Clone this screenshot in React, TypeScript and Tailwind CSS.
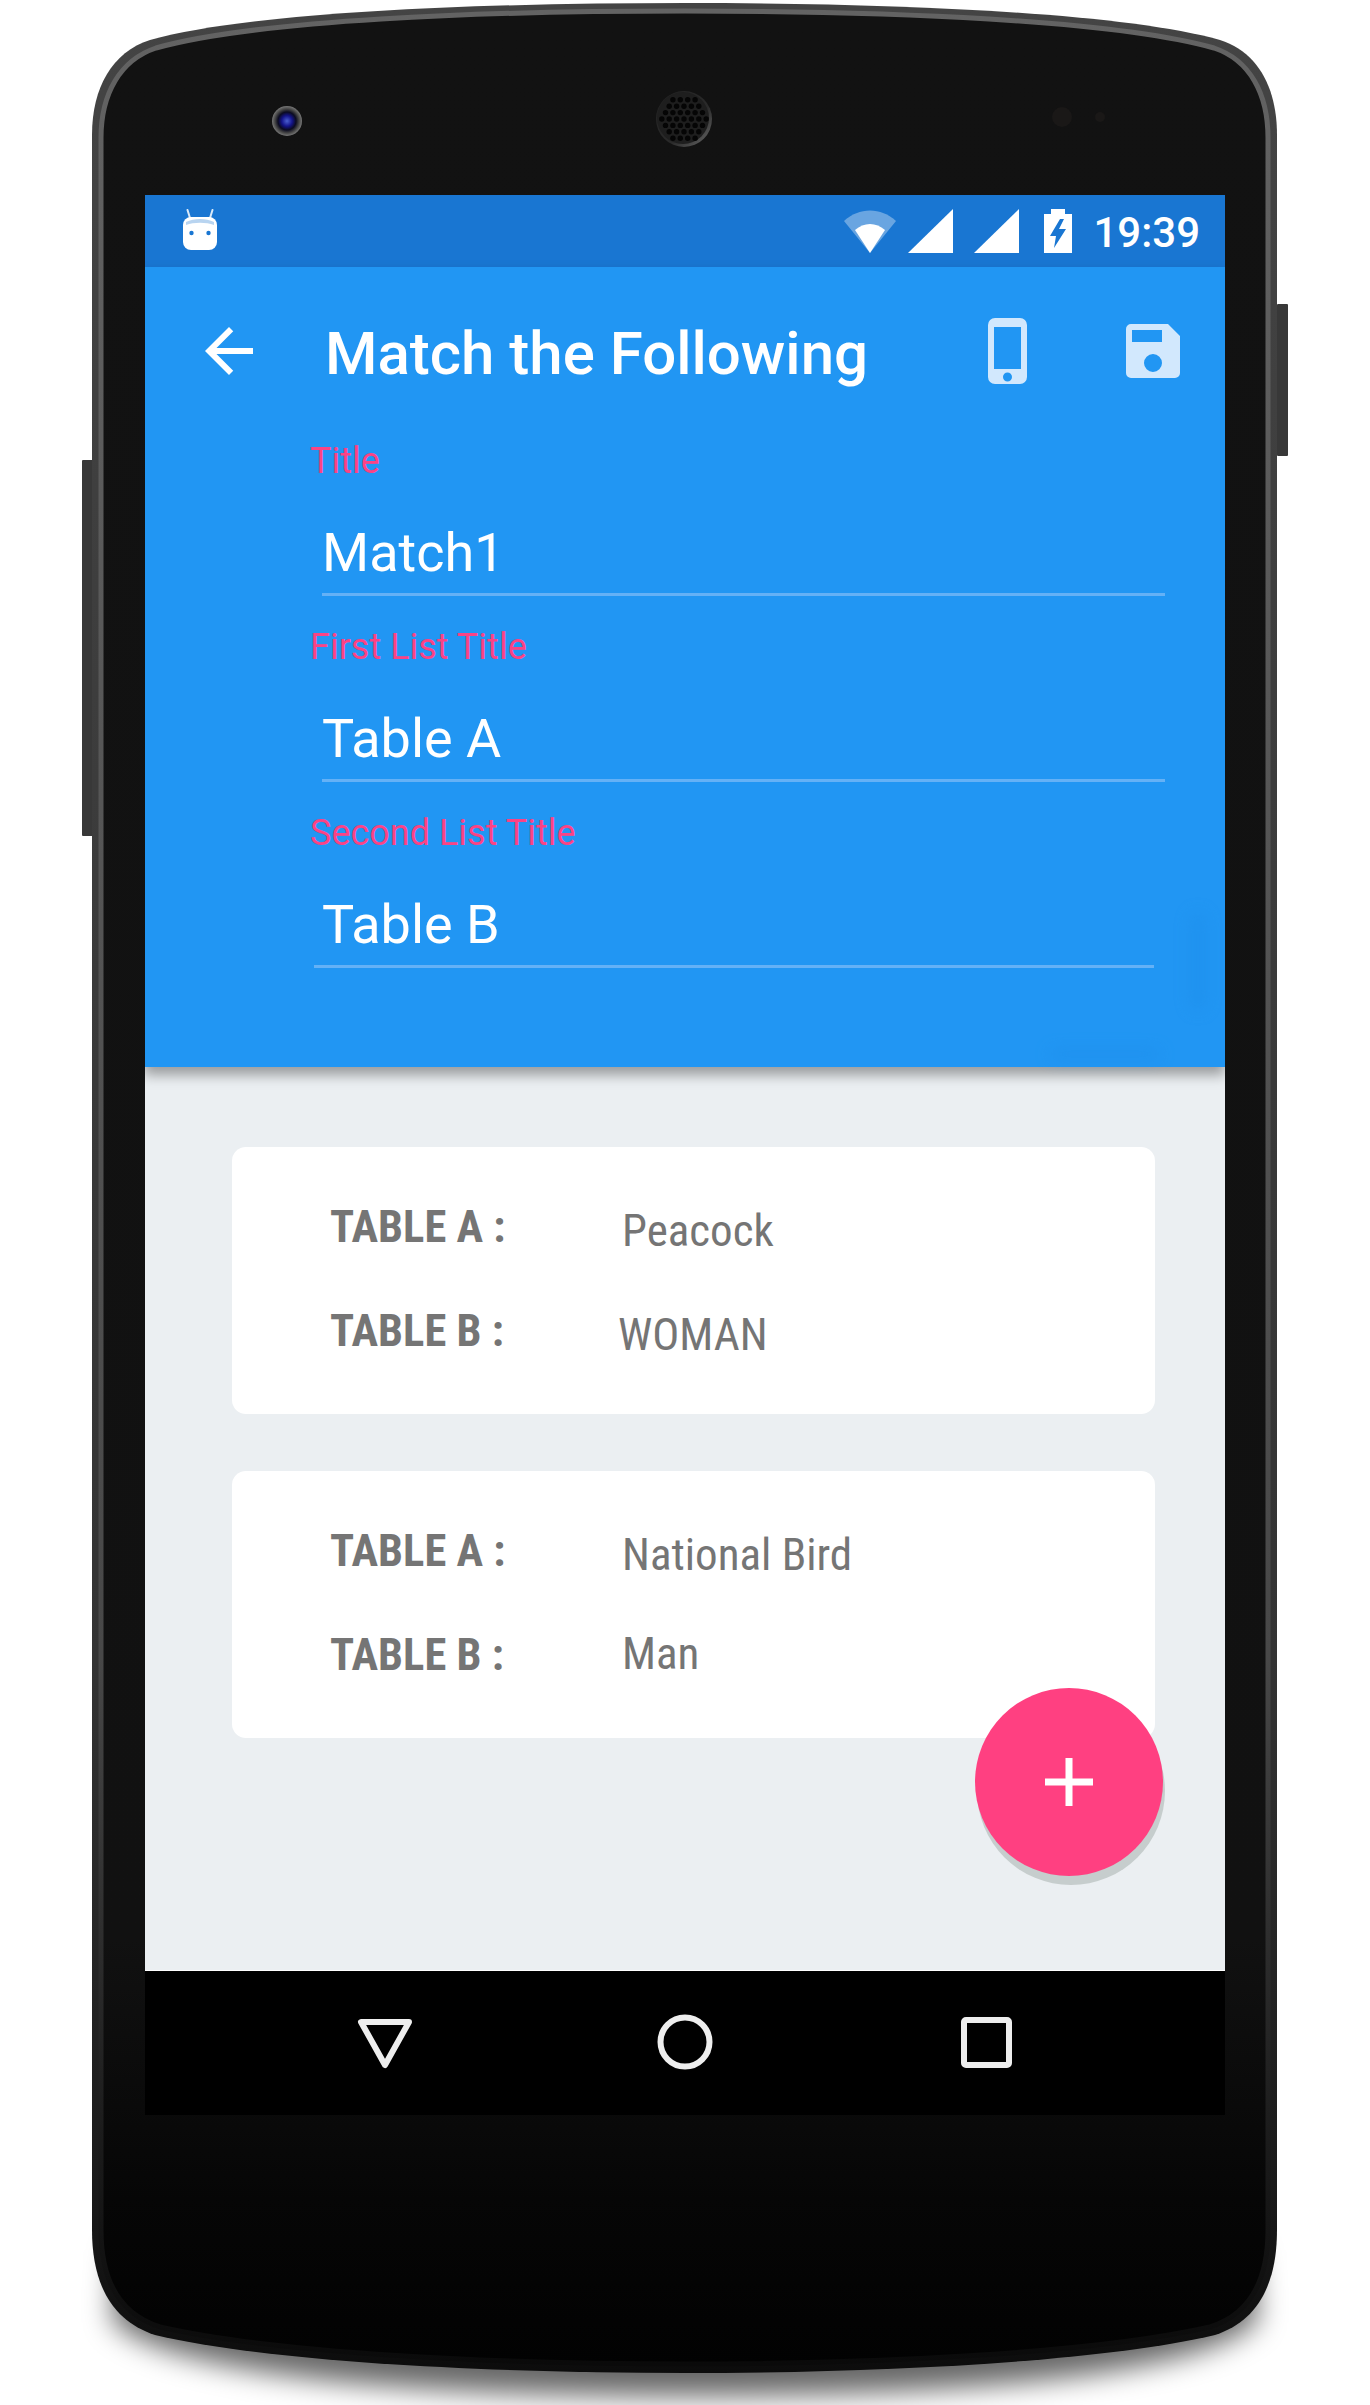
const frame =
  'M92 135C92 88 112 52 150 40C250 12 480 3 685 3C890 3 1120 12 1220 40C1258 52 1277 88 1277 135L1277 2230C1277 2288 1255 2322 1215 2335C1100 2362 880 2373 685 2373C490 2373 270 2362 155 2335C115 2322 92 2288 92 2230Z';
const bezel =
  'M101 138C101 94 120 60 156 48C256 20 480 11 685 11C890 11 1114 20 1214 48C1250 60 1268 94 1268 138L1268 2230C1268 2283 1248 2315 1210 2327C1096 2353 880 2364 685 2364C490 2364 274 2353 160 2327C122 2315 101 2283 101 2230Z';

function speakerHoles() {
  const holes: { x: number; y: number }[] = [];
  for (let row = -3; row <= 3; row++) {
    const count = 7 - Math.abs(row);
    for (let i = 0; i < count; i++) {
      holes.push({ x: 684 + (i - (count - 1) / 2) * 7.4, y: 119 + row * 6.4 });
    }
  }
  return holes;
}

function PhoneBody() {
  return (
    <svg className="absolute left-0 top-0" width="1370" height="2405" viewBox="0 0 1370 2405">
      <defs>
        <linearGradient id="body" x1="0" y1="0" x2="0" y2="1">
          <stop offset="0" stopColor="#121212" />
          <stop offset="0.82" stopColor="#111111" />
          <stop offset="0.93" stopColor="#060606" />
          <stop offset="1" stopColor="#020202" />
        </linearGradient>
        <linearGradient id="rim" x1="0" y1="0" x2="0" y2="1">
          <stop offset="0" stopColor="#444444" />
          <stop offset="0.7" stopColor="#333333" />
          <stop offset="0.92" stopColor="#1a1a1a" />
          <stop offset="1" stopColor="#0c0c0c" />
        </linearGradient>
        <linearGradient id="rimLight" x1="0" y1="0" x2="0" y2="1">
          <stop offset="0" stopColor="#636363" />
          <stop offset="0.7" stopColor="#484848" />
          <stop offset="0.9" stopColor="#1c1c1c" />
          <stop offset="1" stopColor="#0a0a0a" />
        </linearGradient>
        <linearGradient id="grill" x1="0" y1="0" x2="1" y2="1">
          <stop offset="0" stopColor="#222222" />
          <stop offset="0.6" stopColor="#2a2a2a" />
          <stop offset="1" stopColor="#6a6a6a" />
        </linearGradient>
        <radialGradient id="lens">
          <stop offset="0" stopColor="#4a5fd0" />
          <stop offset="0.35" stopColor="#14148a" />
          <stop offset="0.6" stopColor="#0b0b20" />
          <stop offset="0.8" stopColor="#444444" />
          <stop offset="1" stopColor="#777777" />
        </radialGradient>
        <filter id="soft" x="-20%" y="-20%" width="140%" height="140%">
          <feGaussianBlur stdDeviation="14" />
        </filter>
      </defs>
      <path d="M116 2250L1254 2250L1258 2320C1200 2382 900 2396 685 2396C470 2396 170 2382 112 2320Z" fill="#000000" fillOpacity="0.6" filter="url(#soft)" />
      <rect x="1277" y="304" width="11" height="152" rx="1" fill="#383838" />
      <rect x="82" y="460" width="11" height="376" rx="1" fill="#383838" />
      <path d={frame} fill="url(#rim)" />
      <path d={bezel} fill="url(#body)" stroke="url(#rimLight)" strokeWidth="5" />
      <circle cx="287" cy="121" r="15" fill="url(#lens)" />
      <circle cx="684" cy="119" r="28" fill="url(#grill)" />
      <circle cx="683" cy="118" r="26" fill="#1e1e1e" />
      {speakerHoles().map((h) => (
        <circle key={`${h.x}-${h.y}`} cx={h.x} cy={h.y} r="2.7" fill="#050505" />
      ))}
      <circle cx="1062" cy="117" r="10" fill="#1a1817" />
      <circle cx="1100" cy="117" r="5" fill="#1a1817" />
    </svg>
  );
}

function StatusBar() {
  return (
    <div className="flex h-[72px] items-center bg-[#1976d2] pl-[37px] pr-[25px]">
      <svg width="36" height="42" viewBox="0 0 36 42" className="mt-[-2px]">
        <path d="M8 9L5.5 1M28 9L30.5 1" stroke="#ffffff" strokeOpacity="0.85" strokeWidth="2" strokeLinecap="round" />
        <rect x="1" y="8" width="34" height="33" rx="8" fill="#ffffff" />
        <path d="M4 13C12 9 24 9 32 13L32 16C24 13 12 13 4 16Z" fill="#b8d4f0" />
        <circle cx="9.5" cy="24" r="2.2" fill="#1976d2" />
        <circle cx="26.5" cy="24" r="2.2" fill="#1976d2" />
      </svg>
      <div className="ml-auto flex items-center">
        <svg width="52" height="43" viewBox="0 0 52 43">
          <path d="M0 11C15 -3 37 -3 52 11L26 43Z" fill="#ffffff" fillOpacity="0.35" />
          <path d="M11 20C20 12 32 12 41 20L26 43Z" fill="#ffffff" />
        </svg>
        <svg width="45" height="44" viewBox="0 0 45 44" className="ml-[12px]">
          <path d="M45 0V44H0Z" fill="#ffffff" />
        </svg>
        <svg width="45" height="44" viewBox="0 0 45 44" className="ml-[21px]">
          <path d="M45 0V44H0Z" fill="#ffffff" />
        </svg>
        <svg width="28" height="44" viewBox="0 0 28 44" className="ml-[25px]">
          <path fillRule="evenodd" d="M7 5V0H21V5H28V44H0V5ZM16 10L6 27H12L10 39L22 20H15L20 10Z" fill="#ffffff" />
        </svg>
        <span className="ml-[21px] mt-[4px] font-['Roboto',sans-serif] text-[42px] font-medium leading-none text-white">19:39</span>
      </div>
    </div>
  );
}

function AppBarIcons() {
  return (
    <div className="ml-auto flex items-center">
      <svg width="39" height="66" viewBox="0 0 39 66">
        <path fillRule="evenodd" d="M7 0H32A7 7 0 0 1 39 7V59A7 7 0 0 1 32 66H7A7 7 0 0 1 0 59V7A7 7 0 0 1 7 0ZM6 9V51H33V9ZM19.5 54.5A4.5 4.5 0 1 0 19.5 63.5A4.5 4.5 0 1 0 19.5 54.5Z" fill="#d2e8fd" />
      </svg>
      <svg width="54" height="54" viewBox="0 0 54 54" className="ml-[99px]">
        <path fillRule="evenodd" d="M5 0H42L54 12V49A5 5 0 0 1 49 54H5A5 5 0 0 1 0 49V5A5 5 0 0 1 5 0ZM6 6V18H36V6ZM27 30A9 9 0 1 0 27 48A9 9 0 1 0 27 30Z" fill="#d2e8fd" />
      </svg>
    </div>
  );
}

function Field({
  label,
  value,
  line = 'ml-[12px] w-[843px]',
  textPad = '',
}: {
  label: string;
  value: string;
  line?: string;
  textPad?: string;
}) {
  return (
    <div className="h-[186px] pl-[165px]">
      <div className="pt-[7px] font-['Roboto',sans-serif] text-[36px] leading-[38px] text-[#fb4385]">{label}</div>
      <div className={`${line} mt-[46px] h-[70px] border-b-[3px] border-[#64b1f6] font-['Roboto',sans-serif] text-[54px] leading-[54px] text-white`}>
        <span className={textPad}>{value}</span>
      </div>
    </div>
  );
}

function Row({ name, value, shift = 'ml-[117px]', drop = 'mt-[8px]' }: { name: string; value: string; shift?: string; drop?: string }) {
  return (
    <div className="flex h-[104px] items-center pl-[98px]">
      <span className="mt-[3px] w-[175px] whitespace-nowrap font-['Roboto',sans-serif] text-[44.5px] font-bold leading-none text-[#757575] [font-stretch:75%]">{name}</span>
      <span className={`${shift} ${drop} whitespace-nowrap font-['Roboto',sans-serif] text-[45px] leading-none text-[#757575] [font-stretch:75%]`}>{value}</span>
    </div>
  );
}

function Card({ a, b, bShift, bDrop }: { a: string; b: string; bShift?: string; bDrop?: string }) {
  return (
    <div className="ml-[87px] h-[267px] w-[923px] rounded-[14px] bg-white pt-[27px]">
      <Row name="TABLE A :" value={a} />
      <Row name="TABLE B :" value={b} shift={bShift} drop={bDrop} />
    </div>
  );
}

export default function App() {
  return (
    <div className="relative h-[2405px] w-[1370px] overflow-hidden bg-white">
      <PhoneBody />
      <div className="relative pl-[145px] pt-[195px]">
        <div className="flex h-[1920px] w-[1080px] flex-col overflow-hidden">
          <StatusBar />
          <div className="relative z-10 -ml-px h-[800px] border-l border-white bg-[#2196f3] shadow-[0_8px_12px_rgba(0,0,0,0.35)]">
            <div className="flex h-[168px] items-center pl-[48px] pr-[45px]">
              <svg width="72" height="72" viewBox="0 0 24 24">
                <path d="M20 11H7.83l5.59-5.59L12 4l-8 8 8 8 1.41-1.41L7.83 13H20v-2z" fill="#ffffff" />
              </svg>
              <span className="ml-[60px] mt-[6px] font-['Roboto',sans-serif] text-[60px] font-medium leading-none text-white">Match the Following</span>
              <AppBarIcons />
            </div>
            <Field label="Title" value="Match1" />
            <Field label="First List Title" value="Table A" />
            <Field label="Second List Title" value="Table B" line="ml-[4px] w-[840px]" textPad="pl-[8px]" />
            <div className="absolute left-[1046px] top-[646px] h-[97px] w-[14px] rounded-full bg-[#1c8ce8] opacity-50 blur-sm" />
            <div className="absolute left-[905px] top-[783px] h-[8px] w-[110px] rounded-full bg-[#1c8ce8] opacity-60 blur-sm" />
          </div>
          <div className="relative flex-1 border-b border-white bg-[#ebeff2] pt-[80px]">
            <Card a="Peacock" b="WOMAN" bShift="ml-[113px]" />
            <div className="h-[57px]" />
            <Card a="National Bird" b="Man" bDrop="mt-[-2px]" />
            <div className="absolute left-[830px] top-[621px] flex h-[188px] w-[188px] items-center justify-center rounded-full bg-[#ff4081] shadow-[2px_9px_0_#c6cdcd]">
              <svg width="48" height="48" viewBox="0 0 48 48">
                <path d="M24 0V48M0 24H48" stroke="#ffffff" strokeWidth="7" />
              </svg>
            </div>
          </div>
          <div className="flex h-[144px] shrink-0 items-center bg-black">
            <svg width="1080" height="144" viewBox="0 0 1080 144">
              <path d="M216 51H264L240 94Z" fill="none" stroke="#eeeeee" strokeWidth="6" strokeLinejoin="round" />
              <circle cx="540" cy="71" r="24.5" fill="none" stroke="#eeeeee" strokeWidth="6" />
              <rect x="819" y="49" width="45" height="45" rx="2" fill="none" stroke="#eeeeee" strokeWidth="6" />
            </svg>
          </div>
        </div>
      </div>
    </div>
  );
}
